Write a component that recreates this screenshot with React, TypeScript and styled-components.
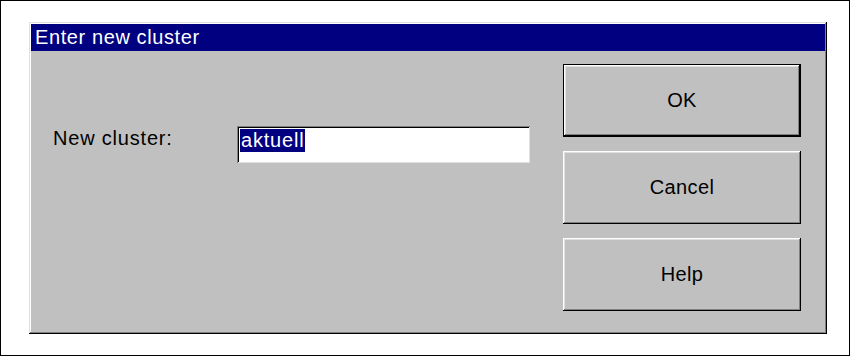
import React from 'react';
import styled, { createGlobalStyle } from 'styled-components';

const GlobalStyle = createGlobalStyle`
  body {
    margin: 0;
    background: #ffffff;
    font-family: 'Liberation Sans', Arial, sans-serif;
  }
`;

const Frame = styled.div`
  box-sizing: border-box;
  width: 850px;
  height: 356px;
  padding: 21px 0 0 28px;
  border: 1px solid #000000;
  background: #ffffff;
`;

const Dialog = styled.div`
  box-sizing: border-box;
  display: flex;
  flex-direction: column;
  width: 798px;
  height: 312px;
  padding: 2px;
  background: #c0c0c0;
  box-shadow:
    inset -1px -1px #000000,
    inset 1px 1px #dfdfdf,
    inset -2px -2px #808080,
    inset 2px 2px #ffffff;
`;

const TitleBar = styled.div`
  display: flex;
  align-items: center;
  height: 27px;
  padding: 0 4px;
  background: #000080;
  color: #ffffff;
  font-size: 20px;
  letter-spacing: 0.6px;
`;

const Body = styled.div`
  flex: 1;
  display: grid;
  grid-template-columns: 1fr 238px;
  padding: 13px 24px 20px 22px;
`;

const FormRow = styled.div`
  display: flex;
  align-items: flex-start;
  margin-top: 62px;
`;

const Label = styled.label`
  width: 184px;
  font-size: 20px;
  line-height: 24px;
  letter-spacing: 0.8px;
  color: #000000;
`;

const Field = styled.div`
  box-sizing: border-box;
  width: 293px;
  height: 37px;
  padding: 3px 3px 0;
  background: #ffffff;
  box-shadow:
    inset 1px 1px #808080,
    inset -1px -1px #dfdfdf,
    inset 2px 2px #000000,
    inset -2px -2px #ffffff;
`;

const Selection = styled.span`
  display: inline-block;
  padding: 0 1px;
  background: #000080;
  color: #ffffff;
  font-size: 20px;
  line-height: 23px;
  letter-spacing: 0.8px;
`;

const ButtonColumn = styled.div`
  display: flex;
  flex-direction: column;
  gap: 14px;
`;

const Button = styled.button<{ $default?: boolean }>`
  box-sizing: border-box;
  height: 73px;
  padding: 0;
  border: ${({ $default }) => ($default ? '1px solid #000000' : 'none')};
  background: #c0c0c0;
  color: #000000;
  font-family: 'Liberation Sans', Arial, sans-serif;
  font-size: 20px;
  letter-spacing: 0.4px;
  box-shadow:
    inset -1px -1px #000000,
    inset 1px 1px #ffffff,
    inset -2px -2px #808080,
    inset 2px 2px #dfdfdf;
  cursor: pointer;
`;

export default function App() {
  return (
    <>
      <GlobalStyle />
      <Frame>
        <Dialog>
          <TitleBar>Enter new cluster</TitleBar>
          <Body>
            <div>
              <FormRow>
                <Label>New cluster:</Label>
                <Field role="textbox">
                  <Selection>aktuell</Selection>
                </Field>
              </FormRow>
            </div>
            <ButtonColumn>
              <Button $default>OK</Button>
              <Button>Cancel</Button>
              <Button>Help</Button>
            </ButtonColumn>
          </Body>
        </Dialog>
      </Frame>
    </>
  );
}
